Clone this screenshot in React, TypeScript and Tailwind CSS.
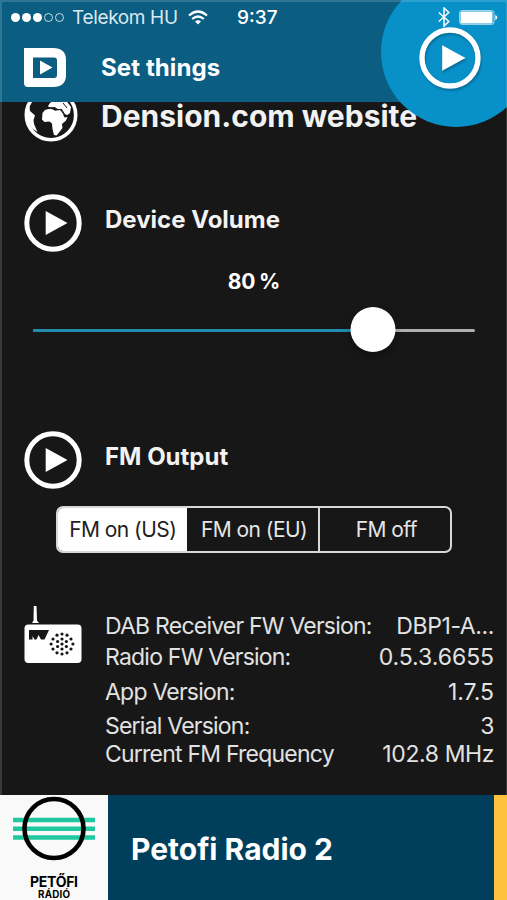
import clsx from "clsx";

const SIGNAL_DOTS = [true, true, true, false, false];
const VOLUME_PERCENT = 77;

const FM_MODES = [
  { label: "FM on (US)", cell: "w-[130px] pr-[9px] pl-[9px] bg-white text-[#222]" },
  { label: "FM on (EU)", cell: "w-[133px] border-r-2 pl-[3px] text-[#e6e6e6]" },
  { label: "FM off", cell: "w-[131px] pl-[3px] text-[#e6e6e6]" },
];

const VERSIONS = [
  { label: "DAB Receiver FW Version:", value: "DBP1-A...", row: "h-8", tracking: "tracking-[-0.4px]" },
  { label: "Radio FW Version:", value: "0.5.3.6655", row: "h-[31px]", tracking: "tracking-[-0.05px]" },
  { label: "App Version:", value: "1.7.5", row: "h-[39px]", tracking: "tracking-[0px]" },
  { label: "Serial Version:", value: "3", row: "h-7", tracking: "tracking-[-0.4px]" },
  { label: "Current FM Frequency", value: "102.8 MHz", row: "h-[29px]", tracking: "tracking-[-0.4px]" },
];

const SPEAKER_HOLES: readonly (readonly [number, number])[] = [
  [38, 28], [43, 29.2], [47, 33], [48.9, 38], [47, 43], [43, 46.8], [38, 48],
  [33, 46.8], [29, 43], [27.1, 38], [29, 33], [33, 29.2],
  [38, 33], [42.4, 35.5], [42.4, 40.5], [38, 43], [33.6, 40.5], [33.6, 35.5], [38, 38],
];

export default function App(): React.JSX.Element {
  return (
    <div className="relative flex h-[900px] w-[507px] flex-col overflow-hidden bg-[#171717] font-['Inter',sans-serif] text-white">
      <Header />
      <main className="flex min-h-0 flex-1 flex-col">
        {/* Scrolled partly under the header */}
        <div className="-mt-[14px] flex h-[82px] shrink-0 items-start pl-6">
          <GlobeIcon />
          <span className="ml-[23px] text-[30px] leading-[56px] font-bold whitespace-nowrap text-[#f2f2f2]">
            Dension.com website
          </span>
        </div>

        <section className="h-[237px] shrink-0">
          <SectionTitle title="Device Volume" />
          <p className="mt-4 pl-[1px] text-center text-[21px] leading-[28px] font-bold tracking-[-0.2px] [word-spacing:-1px]">
            80 %
          </p>
          <VolumeSlider />
        </section>

        <section className="h-[199px] shrink-0">
          <SectionTitle title="FM Output" />
          <div className="mt-[17px] ml-14 flex h-[47px] w-[396px] overflow-hidden rounded-[7px] border-2 border-[#d8d8d8]">
            {FM_MODES.map((mode) => (
              <button
                key={mode.label}
                type="button"
                className={clsx(
                  "border-[#d8d8d8] pt-[1px] text-[21px] tracking-[-0.55px] whitespace-nowrap",
                  mode.cell,
                )}
              >
                {mode.label}
              </button>
            ))}
          </div>
        </section>

        <section className="flex pr-[13px] pl-6">
          <RadioIcon />
          <dl className="ml-[23px] flex-1 pt-1">
            {VERSIONS.map((v) => (
              <div
                key={v.label}
                className={clsx(
                  "flex items-center justify-between text-[23px] whitespace-nowrap text-[#e2e2e2]",
                  v.row,
                )}
              >
                <dt className="tracking-[-0.78px]">{v.label}</dt>
                <dd className={v.tracking}>{v.value}</dd>
              </div>
            ))}
          </dl>
        </section>
      </main>
      <NowPlaying />
      <div className="pointer-events-none absolute inset-x-0 top-0 z-20 h-[795px] border-t-2 border-r border-l-2 border-white/15" />
    </div>
  );
}

function Header(): React.JSX.Element {
  return (
    <header className="relative z-10 h-[102px] shrink-0 bg-[#0b5d82]">
      {/* Playback button hanging off the corner of the bar */}
      <div className="absolute -top-[23px] left-[381px] h-[150px] w-[126px] overflow-hidden">
        <div className="h-[150px] w-[150px] rounded-full bg-[#0891c9] pt-[50px] pl-[38px]">
          <PlayIcon className="h-[62px] w-[62px] drop-shadow-[1px_2px_1px_rgba(0,0,0,0.25)]" />
        </div>
      </div>
      <div className="relative flex h-[34px] items-center pr-[9px] pl-[11px]">
        <div className="flex gap-[2px]">
          {SIGNAL_DOTS.map((on, i) => (
            <span
              key={i}
              className={clsx("h-[9px] w-[9px] rounded-full border border-white/75", on && "bg-white")}
            />
          ))}
        </div>
        <span className="ml-[8px] w-[116px] pt-[2px] text-[19px] tracking-[-0.35px] whitespace-nowrap text-[#d9e9f0]">
          Telekom HU
        </span>
        <WifiIcon />
        <span className="ml-[29px] pt-[2px] text-[19px] font-medium">9:37</span>
        <div className="ml-auto flex items-center gap-[9px]">
          <BluetoothIcon />
          <BatteryIcon />
        </div>
      </div>
      <div className="flex h-[68px] items-center pb-[1px] pl-6">
        <LogoIcon />
        <h1 className="ml-[35px] pt-[1px] text-[24px] font-bold tracking-[0.1px]">Set things</h1>
      </div>
    </header>
  );
}

function SectionTitle({ title }: { readonly title: string }): React.JSX.Element {
  return (
    <div className="flex h-[82px] items-end pl-6">
      <PlayIcon className="h-[58px] w-[58px]" />
      <h2 className="mb-[17px] ml-[23px] text-[24px] leading-[30px] font-bold text-[#f2f2f2]">
        {title}
      </h2>
    </div>
  );
}

function VolumeSlider(): React.JSX.Element {
  return (
    <div className="relative mt-[11px] mr-8 ml-[33px] flex h-[45px] items-center">
      <div className="mt-[2px] h-[3px] w-full rounded-full bg-[#b0b0b0]">
        <div className="h-full rounded-full bg-[#218caf]" style={{ width: `${VOLUME_PERCENT}%` }} />
      </div>
      <div
        className="absolute top-0 h-[45px] w-[45px] -translate-x-1/2 rounded-full bg-white shadow-[0_4px_8px_rgba(0,0,0,0.35)]"
        style={{ left: `${VOLUME_PERCENT}%` }}
      />
    </div>
  );
}

function NowPlaying(): React.JSX.Element {
  return (
    <footer className="flex h-[105px] shrink-0 bg-[#003f5b]">
      <div className="w-[108px] bg-[#f9f9f9]">
        <StationLogo />
      </div>
      <div className="flex flex-1 items-center pt-[4px] pl-[23px] text-[30px] font-bold">
        Petofi Radio 2
      </div>
      <div className="w-[13px] bg-[#ffc23f]" />
    </footer>
  );
}

function StationLogo(): React.JSX.Element {
  return (
    <svg viewBox="0 0 108 105" className="h-[105px] w-[108px]">
      <path d="M13 25h82M13 33.8h82M13 42.5h82" stroke="#1fc8a0" strokeWidth="4.6" />
      <circle cx="54" cy="33.5" r="29.5" fill="none" stroke="#000" strokeWidth="4.6" />
      <text x="54" y="92" textAnchor="middle" textLength="48" fontSize="14" fontWeight="700" fill="#000">
        PETŐFI
      </text>
      <text x="54" y="103.3" textAnchor="middle" textLength="32" fontSize="9.8" fontWeight="700" fill="#000">
        RÁDIÓ
      </text>
    </svg>
  );
}

function PlayIcon({ className }: { readonly className: string }): React.JSX.Element {
  return (
    <svg viewBox="0 0 58 58" className={className}>
      <circle cx="29" cy="29" r="26.2" fill="none" stroke="#fff" strokeWidth="5" />
      <path d="M21.7 17v24L43.5 29z" fill="#fff" />
    </svg>
  );
}

function LogoIcon(): React.JSX.Element {
  return (
    <svg viewBox="0 0 42 39" className="h-[39px] w-[42px]">
      <path
        fill="#fff"
        fillRule="evenodd"
        d="M0 0h29q13 0 13 12v15q0 12-13 12H4q-4 0-4-4zM9 9.5v20.5h21q3 0 3-3V12.5q0-3-3-3z"
      />
      <path d="M16 12.5v14L28.5 19.5z" fill="#fff" />
    </svg>
  );
}

function GlobeIcon(): React.JSX.Element {
  return (
    <svg viewBox="0 0 54 54" className="h-[54px] w-[54px]">
      <circle cx="27" cy="27" r="24.7" fill="none" stroke="#fff" strokeWidth="3.6" />
      {/* Africa */}
      <path
        fill="#fff"
        d="M18.5 25l2.5-3 3.5-1 4 .2 2.5 1.5 5-.7 2.500 3 2 4.500 3-.5-1.500 3.500-4 3.500.5 4-3.500 4.500-2.500 3-2.500-.5-1.500-6-.5-5.500-2.500-2-5 .5-2.500-2.500z"
      />
      {/* Europe and Arabia */}
      <path fill="#fff" d="M24 18l2-3 4-3 3-5 8 4 6 8-1 6-2.5 2-3.500-1-3-5h-4l-2-2-3 .5-2 1z" />
      <path fill="none" stroke="#171717" strokeWidth="1" d="M25 19.5l5 .5 4 1.5h4M39 15l4 5M38 22l3 5" />
      {/* South America */}
      <path fill="#fff" d="M3 15l2.5 4 .5 4 5 4.500-1.500 4.500.5 4 3.500 8-6-4-5-10z" />
    </svg>
  );
}

function WifiIcon(): React.JSX.Element {
  return (
    <svg viewBox="0 0 20 15" className="h-[15px] w-[20px]" fill="none" stroke="#fff" strokeWidth="2.2">
      <path d="M1 5.5q9-8 18 0M4.2 9q5.800-5 11.600 0" />
      <path d="M7 11.5q3-2.600 6 0L10 14.5z" fill="#fff" stroke="none" />
    </svg>
  );
}

function BluetoothIcon(): React.JSX.Element {
  return (
    <svg viewBox="0 0 12 20" className="h-5 w-3" fill="none" stroke="#fff" strokeWidth="1.5">
      <path d="M.8 5.5l10 9L6 19V1l4.800 4.500-10 9" />
    </svg>
  );
}

function BatteryIcon(): React.JSX.Element {
  return (
    <svg viewBox="0 0 39 15" className="h-[15px] w-[39px]">
      <rect x=".6" y=".6" width="34.5" height="13.8" rx="2.5" fill="none" stroke="#fff" strokeOpacity=".65" />
      <rect x="1.5" y="1.5" width="32" height="12" rx="1.2" fill="#fff" />
      <path d="M36.3 5q2 .6 2 2.500t-2 2.500z" fill="#fff" />
    </svg>
  );
}

function RadioIcon(): React.JSX.Element {
  return (
    <svg viewBox="0 0 58 58" className="h-[58px] w-[58px]">
      <path d="M9.8 0h2.700l.5 14.500 2 2.500H8l1.500-2.500z" fill="#fff" />
      <rect x=".5" y="18.5" width="57" height="38.5" rx="4" fill="#fff" />
      <path d="M5 24h20l-4.500 9.500H17L14.5 29l-2 4.500h-2L8.500 30v3.500H5z" fill="#171717" />
      {SPEAKER_HOLES.map(([x, y]) => (
        <circle key={`${x}-${y}`} cx={x} cy={y} r="1.6" fill="#171717" />
      ))}
    </svg>
  );
}
